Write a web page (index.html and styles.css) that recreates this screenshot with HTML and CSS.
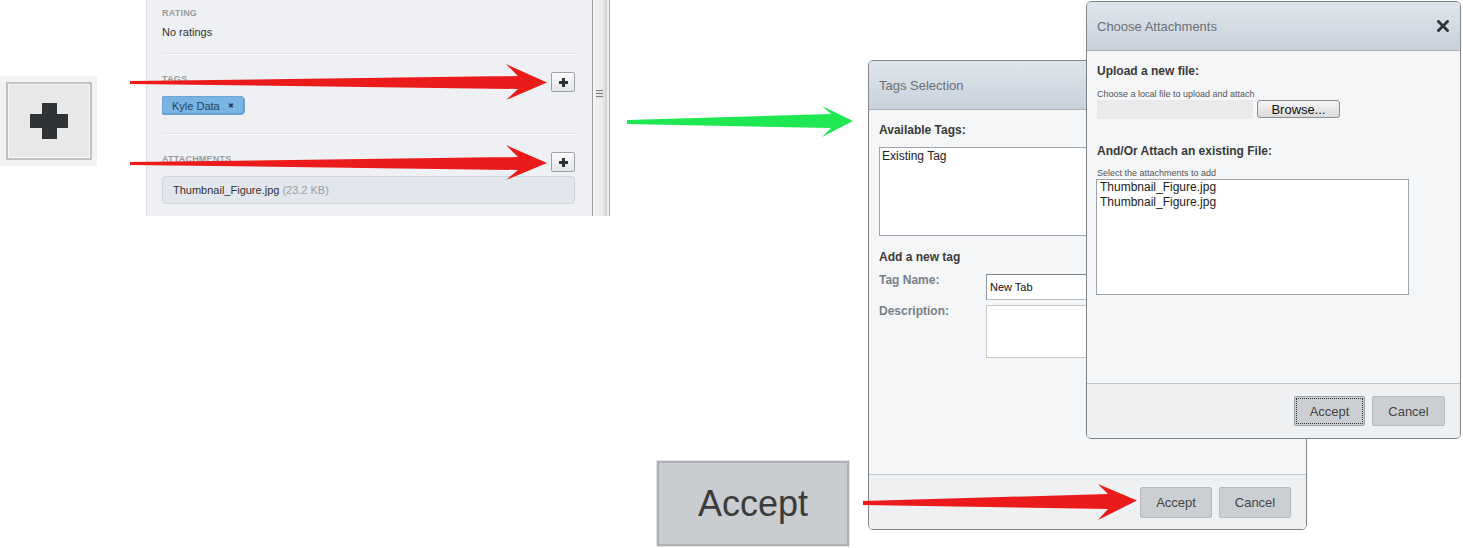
FILE: index.html
```html
<!DOCTYPE html>
<html>
<head>
<meta charset="utf-8">
<link rel="stylesheet" href="styles.css">
</head>
<body>
<div class="canvas">

  <div class="bigplus">
    <div class="bigplus-btn">
      <svg width="38" height="36" viewBox="0 0 38 36"><rect x="12" y="0" width="15" height="36" fill="#303336"/><rect x="0" y="11" width="38" height="14" fill="#303336"/></svg>
    </div>
  </div>

  <div class="sidebar">
    <div class="sb-content">
      <div class="sb-label first">RATING</div>
      <div class="sb-text">No ratings</div>
      <div class="sb-sep"></div>
      <div class="sb-row">
        <div class="sb-label">TAGS</div>
        <div class="mini-plus"><svg width="9" height="9" viewBox="0 0 9 9"><rect x="3" y="0" width="3" height="9" fill="#2e3033"/><rect x="0" y="3" width="9" height="3" fill="#2e3033"/></svg></div>
      </div>
      <div class="chip-line"><span class="chip">Kyle Data <span class="chip-x">✖</span></span></div>
      <div class="sb-sep second"></div>
      <div class="sb-row">
        <div class="sb-label">ATTACHMENTS</div>
        <div class="mini-plus"><svg width="9" height="9" viewBox="0 0 9 9"><rect x="3" y="0" width="3" height="9" fill="#2e3033"/><rect x="0" y="3" width="9" height="3" fill="#2e3033"/></svg></div>
      </div>
      <div class="att-box">Thumbnail_Figure.jpg <span class="att-size">(23.2 KB)</span></div>
    </div>
    <div class="sb-scroll"><div class="grip"></div></div>
  </div>

  <div class="dlg tags-dlg">
    <div class="dlg-head">Tags Selection</div>
    <div class="dlg-body">
      <div class="b-title t-avail">Available Tags:</div>
      <div class="listbox tag-list"><div class="li">Existing Tag</div></div>
      <div class="b-title t-add">Add a new tag</div>
      <div class="form-row r-name">
        <div class="f-label">Tag Name:</div>
        <div class="f-input">New Tab</div>
      </div>
      <div class="form-row r-desc">
        <div class="f-label">Description:</div>
        <div class="f-area"></div>
      </div>
    </div>
    <div class="dlg-foot">
      <div class="btn">Accept</div>
      <div class="btn">Cancel</div>
    </div>
  </div>

  <div class="dlg attach-dlg">
    <div class="dlg-head">
      <span>Choose Attachments</span>
      <svg class="close" width="12" height="12" viewBox="0 0 12 12"><path d="M1.5 1.5 L10.5 10.5 M10.5 1.5 L1.5 10.5" stroke="#2f3236" stroke-width="2.8" stroke-linecap="square"/></svg>
    </div>
    <div class="dlg-body">
      <div class="b-title a-upload">Upload a new file:</div>
      <div class="small a-choose">Choose a local file to upload and attach</div>
      <div class="file-row">
        <div class="file-field"></div>
        <div class="browse">Browse...</div>
      </div>
      <div class="b-title a-exist">And/Or Attach an existing File:</div>
      <div class="small a-select">Select the attachments to add</div>
      <div class="listbox att-list">
        <div class="li">Thumbnail_Figure.jpg</div>
        <div class="li">Thumbnail_Figure.jpg</div>
      </div>
    </div>
    <div class="dlg-foot">
      <div class="btn a-btn focus">Accept</div>
      <div class="btn a-btn wide">Cancel</div>
    </div>
  </div>

  <div class="big-accept">Accept</div>

  <svg class="arrows" width="1463" height="548" viewBox="0 0 1463 548">
    <polygon fill="#ec1b1b" points="130,81 518,76 506,64 547,82.5 506,100 518,89 130,84"/>
    <polygon fill="#ec1b1b" points="130,162 518,157 506,145 547,163 506,180 518,170 130,165"/>
    <polygon fill="#20e852" points="627,120 831,114 822,106 853,121 822,137 831,128 627,124"/>
    <polygon fill="#ec1b1b" points="863,501 1108,494 1098,484 1137,500.5 1098,520 1108,509 863,505"/>
  </svg>

</div>
</body>
</html>
```

FILE: styles.css
```css
html, body {
  margin: 0;
  padding: 0;
  background: #ffffff;
}

.canvas {
  position: relative;
  width: 1463px;
  height: 548px;
  overflow: hidden;
  font-family: "Liberation Sans", Arial, sans-serif;
  color: #333;
}

/* ---------- big plus ---------- */
.bigplus {
  position: absolute;
  left: 0;
  top: 76px;
  width: 97px;
  height: 90px;
  background: #f3f3f3;
  display: flex;
  align-items: center;
  justify-content: center;
}
.bigplus-btn {
  width: 82px;
  height: 74px;
  border: 2px solid #c2c2c2;
  background: #e8e8e8;
  display: flex;
  align-items: center;
  justify-content: center;
  box-shadow: inset 0 0 0 1px #f6f6f6;
}

/* ---------- sidebar ---------- */
.sidebar {
  position: absolute;
  left: 146px;
  top: 0;
  width: 464px;
  height: 216px;
  display: flex;
  background: #eff0f4;
  border-left: 1px solid #dcdee3;
  box-sizing: border-box;
}
.sb-content {
  flex: 1;
  padding: 0 17px 0 15px;
  display: flex;
  flex-direction: column;
}
.sb-label {
  font-size: 9px;
  font-weight: bold;
  color: #9a9ca0;
  line-height: 12px;
  letter-spacing: 0.2px;
}
.sb-label.first { margin-top: 7px; }
.sb-text {
  font-size: 11px;
  color: #333;
  line-height: 14px;
  margin-top: 6px;
}
.sb-sep {
  height: 1px;
  background: #dfe1e6;
  border-bottom: 1px solid #f7f8fa;
  margin-top: 14px;
}
.sb-sep.second { margin-top: 18px; }
.sb-row {
  display: flex;
  justify-content: space-between;
  align-items: flex-start;
  margin-top: 17px;
  height: 20px;
}
.sb-row .sb-label { margin-top: 1px; }
.mini-plus {
  width: 22px;
  height: 18px;
  border: 1px solid #9ea2a8;
  border-radius: 2px;
  background: linear-gradient(#fbfbfc, #e3e5e8);
  display: flex;
  align-items: center;
  justify-content: center;
}
.chip-line {
  margin-top: 4px;
  display: flex;
}
.chip {
  display: inline-flex;
  align-items: center;
  gap: 8px;
  height: 19px;
  width: 83px;
  padding: 0 0 0 9px;
  box-sizing: border-box;
  background: #7ab4e2;
  border: 1px solid #6ca6d6;
  border-radius: 1px 4px 4px 1px;
  box-shadow: inset -1px -1px 0 #6a9fcc;
  font-size: 11px;
  color: #27425e;
}
.chip-x {
  font-size: 7px;
  color: #2b3a4a;
}
.att-box {
  margin-top: 4px;
  height: 28px;
  box-sizing: border-box;
  background: #e2e6ed;
  border: 1px solid #cfd4dc;
  border-radius: 4px;
  font-size: 11px;
  color: #333;
  display: flex;
  align-items: center;
  padding-left: 10px;
  gap: 3px;
}
.att-size { color: #9a9da2; }
.sb-scroll {
  width: 18px;
  box-sizing: border-box;
  border-left: 1px solid #9d9fa3;
  border-right: 1px solid #a4a6aa;
  background: linear-gradient(to right, #f5f5f6 0%, #e9eaeb 60%, #cfd0d2 85%, #f2f2f2 87%, #f2f2f2 100%);
  display: flex;
  justify-content: center;
  padding-top: 90px;
}
.grip {
  width: 7px;
  height: 9px;
  margin-left: -4px;
  background: repeating-linear-gradient(#7b7d80 0 1px, #e6e6e6 1px 3px);
}

/* ---------- dialogs ---------- */
.dlg {
  position: absolute;
  box-sizing: border-box;
  border: 1px solid #7f8489;
  border-radius: 5px;
  background: #f5f6f8;
  display: flex;
  flex-direction: column;
  overflow: hidden;
}
.tags-dlg {
  left: 868px;
  top: 60px;
  width: 439px;
  height: 470px;
  z-index: 1;
}
.attach-dlg {
  left: 1086px;
  top: 1px;
  width: 375px;
  height: 438px;
  z-index: 2;
}
.dlg-head {
  height: 49px;
  flex: none;
  box-sizing: border-box;
  border-bottom: 1px solid #a9b1ba;
  background: linear-gradient(#dfe5ec, #c8d1db);
  display: flex;
  align-items: center;
  justify-content: space-between;
  padding: 0 10px;
  font-size: 13px;
  color: #6b7076;
}
.close { margin-right: 1px; }
.dlg-body {
  flex: 1;
  padding: 0 10px;
  display: flex;
  flex-direction: column;
}
.dlg-foot {
  height: 55px;
  flex: none;
  box-sizing: border-box;
  border-top: 1px solid #c3c6ca;
  background: #eff0f2;
  display: flex;
  justify-content: flex-end;
  align-items: center;
  gap: 7px;
  padding-right: 15px;
}
.btn {
  width: 72px;
  height: 31px;
  box-sizing: border-box;
  background: #cbcfd4;
  border: 1px solid #b5b9be;
  border-radius: 2px;
  display: flex;
  align-items: center;
  justify-content: center;
  font-size: 13px;
  color: #444;
}
.a-btn { height: 30px; width: 71px; }
.a-btn.wide { width: 73px; }
.btn.focus {
  outline: 1px dotted #333;
  outline-offset: -3px;
  border-color: #9ea2a7;
}

.b-title {
  font-size: 12px;
  font-weight: bold;
  color: #3a3a3a;
  line-height: 16px;
}
.t-avail { margin-top: 12px; }
.listbox {
  background: #fff;
  border: 1px solid #9ea4ab;
  box-sizing: border-box;
  font-size: 12px;
  color: #222;
}
.listbox .li { line-height: 14px; padding-left: 2px; }
.tag-list {
  margin-top: 9px;
  width: 340px;
  height: 89px;
  padding-top: 1px;
}
.t-add { margin-top: 13px; }
.form-row {
  display: flex;
  align-items: flex-start;
}
.r-name { margin-top: 9px; }
.r-desc { margin-top: 5px; }
.f-label {
  width: 107px;
  flex: none;
  font-size: 12px;
  font-weight: bold;
  color: #788089;
  line-height: 16px;
  margin-top: -2px;
}
.f-input {
  width: 220px;
  height: 26px;
  box-sizing: border-box;
  background: #fff;
  border: 1px solid #b9bec5;
  border-top-color: #7d8794;
  border-left-color: #8e98a4;
  font-size: 11px;
  color: #111;
  display: flex;
  align-items: center;
  padding-left: 3px;
}
.f-area {
  width: 220px;
  height: 53px;
  box-sizing: border-box;
  background: #fff;
  border: 1px solid #c3c7cc;
}

.small {
  font-size: 9px;
  color: #555;
  line-height: 11px;
}
.a-upload { margin-top: 12px; }
.a-choose { margin-top: 10px; }
.file-row {
  display: flex;
  gap: 4px;
  margin-top: 0;
}
.file-field {
  width: 156px;
  height: 19px;
  background: #e9eaec;
}
.browse {
  width: 83px;
  height: 18px;
  box-sizing: border-box;
  border: 1px solid #8b8d90;
  border-radius: 3px;
  background: linear-gradient(#f5f5f5, #dadada);
  font-size: 13px;
  color: #111;
  display: flex;
  align-items: center;
  justify-content: center;
}
.a-exist { margin-top: 24px; }
.a-select { margin-top: 9px; }
.att-list {
  margin-top: 0;
  margin-left: -1px;
  width: 313px;
  height: 116px;
}
.att-list .li { line-height: 15px; padding-left: 3px; }

/* ---------- big accept ---------- */
.big-accept {
  position: absolute;
  left: 657px;
  top: 461px;
  width: 192px;
  height: 85px;
  box-sizing: border-box;
  background: #c9ccd0;
  border: 2px solid #adb0b4;
  box-shadow: 0 0 0 1px #e4e5e7;
  display: flex;
  align-items: center;
  justify-content: center;
  font-size: 36px;
  color: #3b3b3b;
  padding-top: 1px;
}

/* ---------- arrows overlay ---------- */
.arrows {
  position: absolute;
  left: 0;
  top: 0;
  z-index: 5;
  pointer-events: none;
}
```
